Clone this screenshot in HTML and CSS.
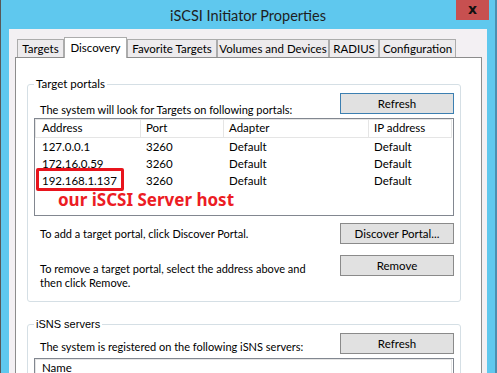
FILE: index.html
```html
<!DOCTYPE html>
<html>
<head>
<meta charset="utf-8">
<title>iSCSI Initiator Properties</title>
<link rel="stylesheet" href="styles.css">
</head>
<body>
<div class="window">
  <div class="titlebar">
    <div class="title">iSCSI Initiator Properties</div>
    <div class="close">x</div>
  </div>
  <div class="client">
    <div class="tabs">
      <div class="tab t1">Targets</div>
      <div class="tab t2 active">Discovery</div>
      <div class="tab t3">Favorite Targets</div>
      <div class="tab t4">Volumes and Devices</div>
      <div class="tab t5">RADIUS</div>
      <div class="tab t6">Configuration</div>
    </div>
    <div class="page">
      <fieldset class="group g1">
        <legend>Target portals</legend>
        <div class="toprow">
          <span class="caption">The system will look for Targets on following portals:</span>
          <button class="btn default">Refresh</button>
        </div>
        <div class="list l1">
          <div class="lrow head">
            <div class="c1">Address</div><div class="c2">Port</div><div class="c3">Adapter</div><div class="c4">IP address</div>
          </div>
          <div class="lrow">
            <div class="c1">127.0.0.1</div><div class="c2">3260</div><div class="c3">Default</div><div class="c4">Default</div>
          </div>
          <div class="lrow">
            <div class="c1">172.16.0.59</div><div class="c2">3260</div><div class="c3">Default</div><div class="c4">Default</div>
          </div>
          <div class="lrow">
            <div class="c1">192.168.1.137</div><div class="c2">3260</div><div class="c3">Default</div><div class="c4">Default</div>
          </div>
          <div class="note">our iSCSI Server host</div>
          <div class="mark"></div>
        </div>
        <div class="act act1">
          <span class="text">To add a target portal, click Discover Portal.</span>
          <button class="btn">Discover Portal...</button>
        </div>
        <div class="act act2">
          <span class="text">To remove a target portal, select the address above and<br>then click Remove.</span>
          <button class="btn">Remove</button>
        </div>
      </fieldset>
      <fieldset class="group g2">
        <legend class="legend2">iSNS servers</legend>
        <div class="toprow">
          <span class="caption">The system is registered on the following iSNS servers:</span>
          <button class="btn">Refresh</button>
        </div>
        <div class="list l2">
          <div class="lrow head single">
            <div class="c1">Name</div>
          </div>
        </div>
      </fieldset>
    </div>
  </div>
</div>
</body>
</html>
```

FILE: styles.css
```css
* { box-sizing: border-box; }
html, body { margin: 0; padding: 0; }
body {
  width: 497px;
  height: 373px;
  overflow: hidden;
  font-family: Lato, "Noto Sans", sans-serif;
  font-size: 11px;
  color: #000;
}
.window {
  width: 497px;
  height: 373px;
  background: #5fc8ee;
  border-left: 1px solid #585858;
  border-right: 2px solid #4b8fb0;
  display: flex;
  flex-direction: column;
}
.titlebar {
  flex: none;
  height: 29px;
  position: relative;
  display: flex;
  align-items: center;
  justify-content: center;
}
.title {
  font-size: 14.5px;
  color: #1e1e1e;
  margin-top: 1px;
}
.close {
  position: absolute;
  top: 0;
  right: 6px;
  width: 33px;
  height: 20px;
  background: #c75050;
  display: flex;
  align-items: center;
  justify-content: center;
  font: bold 14px "DejaVu Sans", sans-serif;
  color: #111;
  padding-bottom: 2px;
}
.client {
  flex: 1;
  margin: 0 8px;
  background: #f3f0f3;
  padding-top: 8px;
  overflow: hidden;
}
.tabs {
  display: flex;
  align-items: flex-end;
  height: 20px;
  margin-left: 8px;
  position: relative;
  z-index: 1;
}
.tab {
  flex: none;
  height: 18px;
  border: 1px solid #acacac;
  border-bottom: none;
  background: #edebed;
  display: flex;
  align-items: center;
  justify-content: center;
  white-space: nowrap;
  font-size: 11.5px;
}
.tab.active {
  height: 21px;
  background: #fff;
  margin-bottom: -1px;
  padding-bottom: 1px;
}
.t1 { width: 47px; }
.t2 { width: 63px; }
.t3 { width: 90px; }
.t4 { width: 112px; }
.t5 { width: 50px; }
.t6 { width: 77px; }
.page {
  margin-left: 6px;
  width: 467px;
  height: 330px;
  border: 1px solid #8c8c8c;
  background: #fff;
  padding: 0 20px 0 11px;
}
.group {
  margin: 18px 0 0;
  padding: 0 6px 11px;
  border: 1px solid #d5dfe5;
  border-radius: 3px;
  min-width: 0;
}
.group legend {
  padding: 0 2px;
  line-height: 16px;
  font-size: 11.5px;
}
.g2 { margin-top: 14px; }
.group .legend2 {
  font-family: "Liberation Sans", Arial, sans-serif;
  font-size: 11px;
}
.toprow {
  display: flex;
  justify-content: space-between;
  height: 25px;
  margin-top: 1px;
}
.caption {
  align-self: flex-end;
  line-height: 16px;
  margin-left: 6px;
  white-space: nowrap;
}
.g2 .caption { margin-bottom: 3px; }
.btn {
  flex: none;
  width: 114px;
  height: 21px;
  padding: 0;
  border: 1px solid #8a8a8a;
  background: #e1e1e1;
  font: inherit;
  font-size: 11.5px;
  color: #000;
}
.btn.default { border-color: #3c7fb1; }
.list {
  position: relative;
  border: 1px solid #828790;
  background: #fff;
  height: 98px;
}
.l2 { height: 40px; }
.lrow {
  display: grid;
  grid-template-columns: 106px 83px 145px 83px;
  height: 17px;
  line-height: 17px;
  white-space: nowrap;
  font-size: 11.5px;
}
.lrow > div { padding-left: 5px; }
.lrow > .c1 { padding-left: 7px; }
.lrow.head { height: 19px; }
.head > div {
  border-top: 1px solid #e5e5e5;
  border-bottom: 1px solid #e5e5e5;
  border-right: 1px solid #e5e5e5;
  line-height: 16px;
}
.head > .c1 {
  border-left: 1px solid #e5e5e5;
  padding-left: 6px;
}
.head.single { grid-template-columns: 417px; }
.note {
  margin: 1px 0 0 23px;
  color: #ec1c24;
  font-family: "Noto Sans", sans-serif;
  font-weight: bold;
  font-size: 17px;
  line-height: 20px;
}
.mark {
  position: absolute;
  left: 1px;
  top: 49px;
  width: 88px;
  height: 23px;
  border: 3px solid #e8141c;
  border-radius: 2px;
}
.act {
  display: flex;
  justify-content: space-between;
  align-items: center;
  margin-top: 7px;
}
.act2 {
  align-items: flex-start;
  margin-top: 11px;
}
.text { margin-left: 6px; white-space: nowrap; }
.act2 .text {
  margin-top: 7px;
  line-height: 14px;
}
```
